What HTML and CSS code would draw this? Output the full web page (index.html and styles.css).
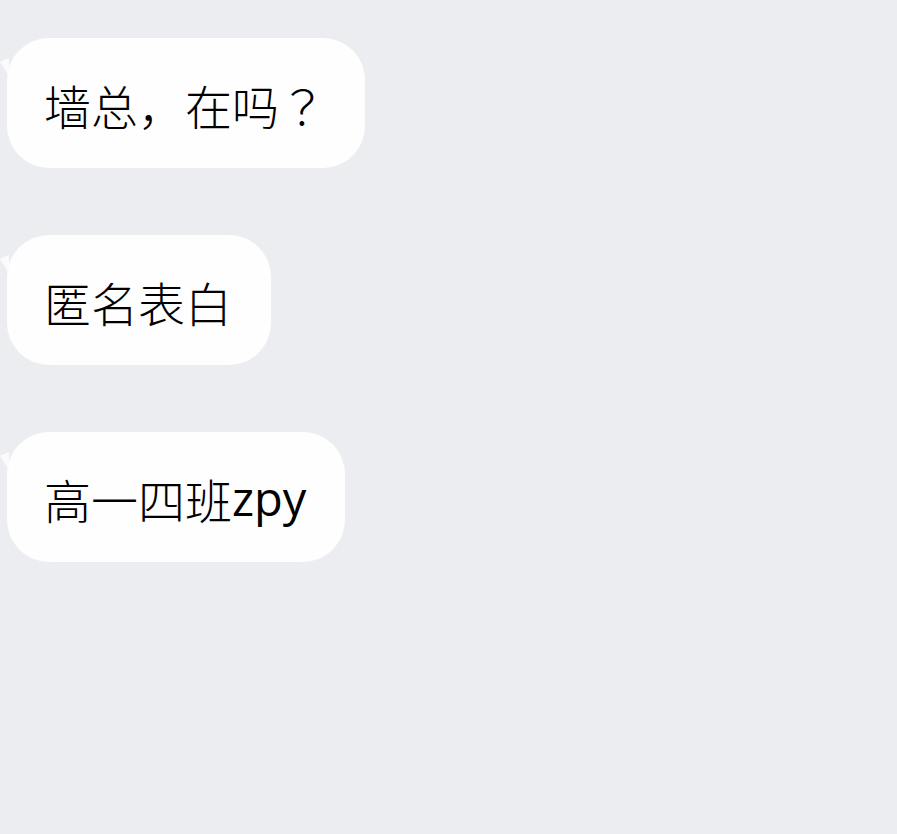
FILE: index.html
```html
<!DOCTYPE html>
<html lang="zh">
<head>
<meta charset="utf-8">
<link rel="stylesheet" href="styles.css">
</head>
<body>
<div class="chat">
  <div class="msg"><div class="bubble">墙总，在吗<span class="qmark">？</span></div></div>
  <div class="msg"><div class="bubble">匿名表白</div></div>
  <div class="msg"><div class="bubble">高一四班<span class="latin">zpy</span></div></div>
</div>
</body>
</html>
```
FILE: styles.css
```css
html, body {
  margin: 0;
  padding: 0;
  background: #ecedf1;
  height: 100%;
}
.chat {
  display: flex;
  flex-direction: column;
  align-items: flex-start;
  gap: 67px;
  padding-top: 38px;
}
.msg {
  padding-left: 7px;
}
.bubble {
  position: relative;
  display: flex;
  align-items: center;
  height: 130px;
  box-sizing: border-box;
  padding: 2px 39px 0 37px;
  background: #fefefe;
  border-radius: 42px;
  font-family: "Noto Sans CJK SC", "Noto Sans", sans-serif;
  font-weight: 300;
  font-size: 47px;
  color: #000;
}
.qmark {
  font-family: "Noto Sans CJK JP", "Noto Sans CJK SC", sans-serif;
}
.latin {
  font-family: "Open Sans", "Noto Sans", sans-serif;
  font-weight: 400;
  font-size: 47px;
}
.bubble::before {
  content: "";
  position: absolute;
  left: -7px;
  top: 20px;
  width: 0;
  height: 0;
  border-top: 4px solid transparent;
  border-bottom: 14px solid transparent;
  border-right: 9px solid #fbfbfc;
}
```
